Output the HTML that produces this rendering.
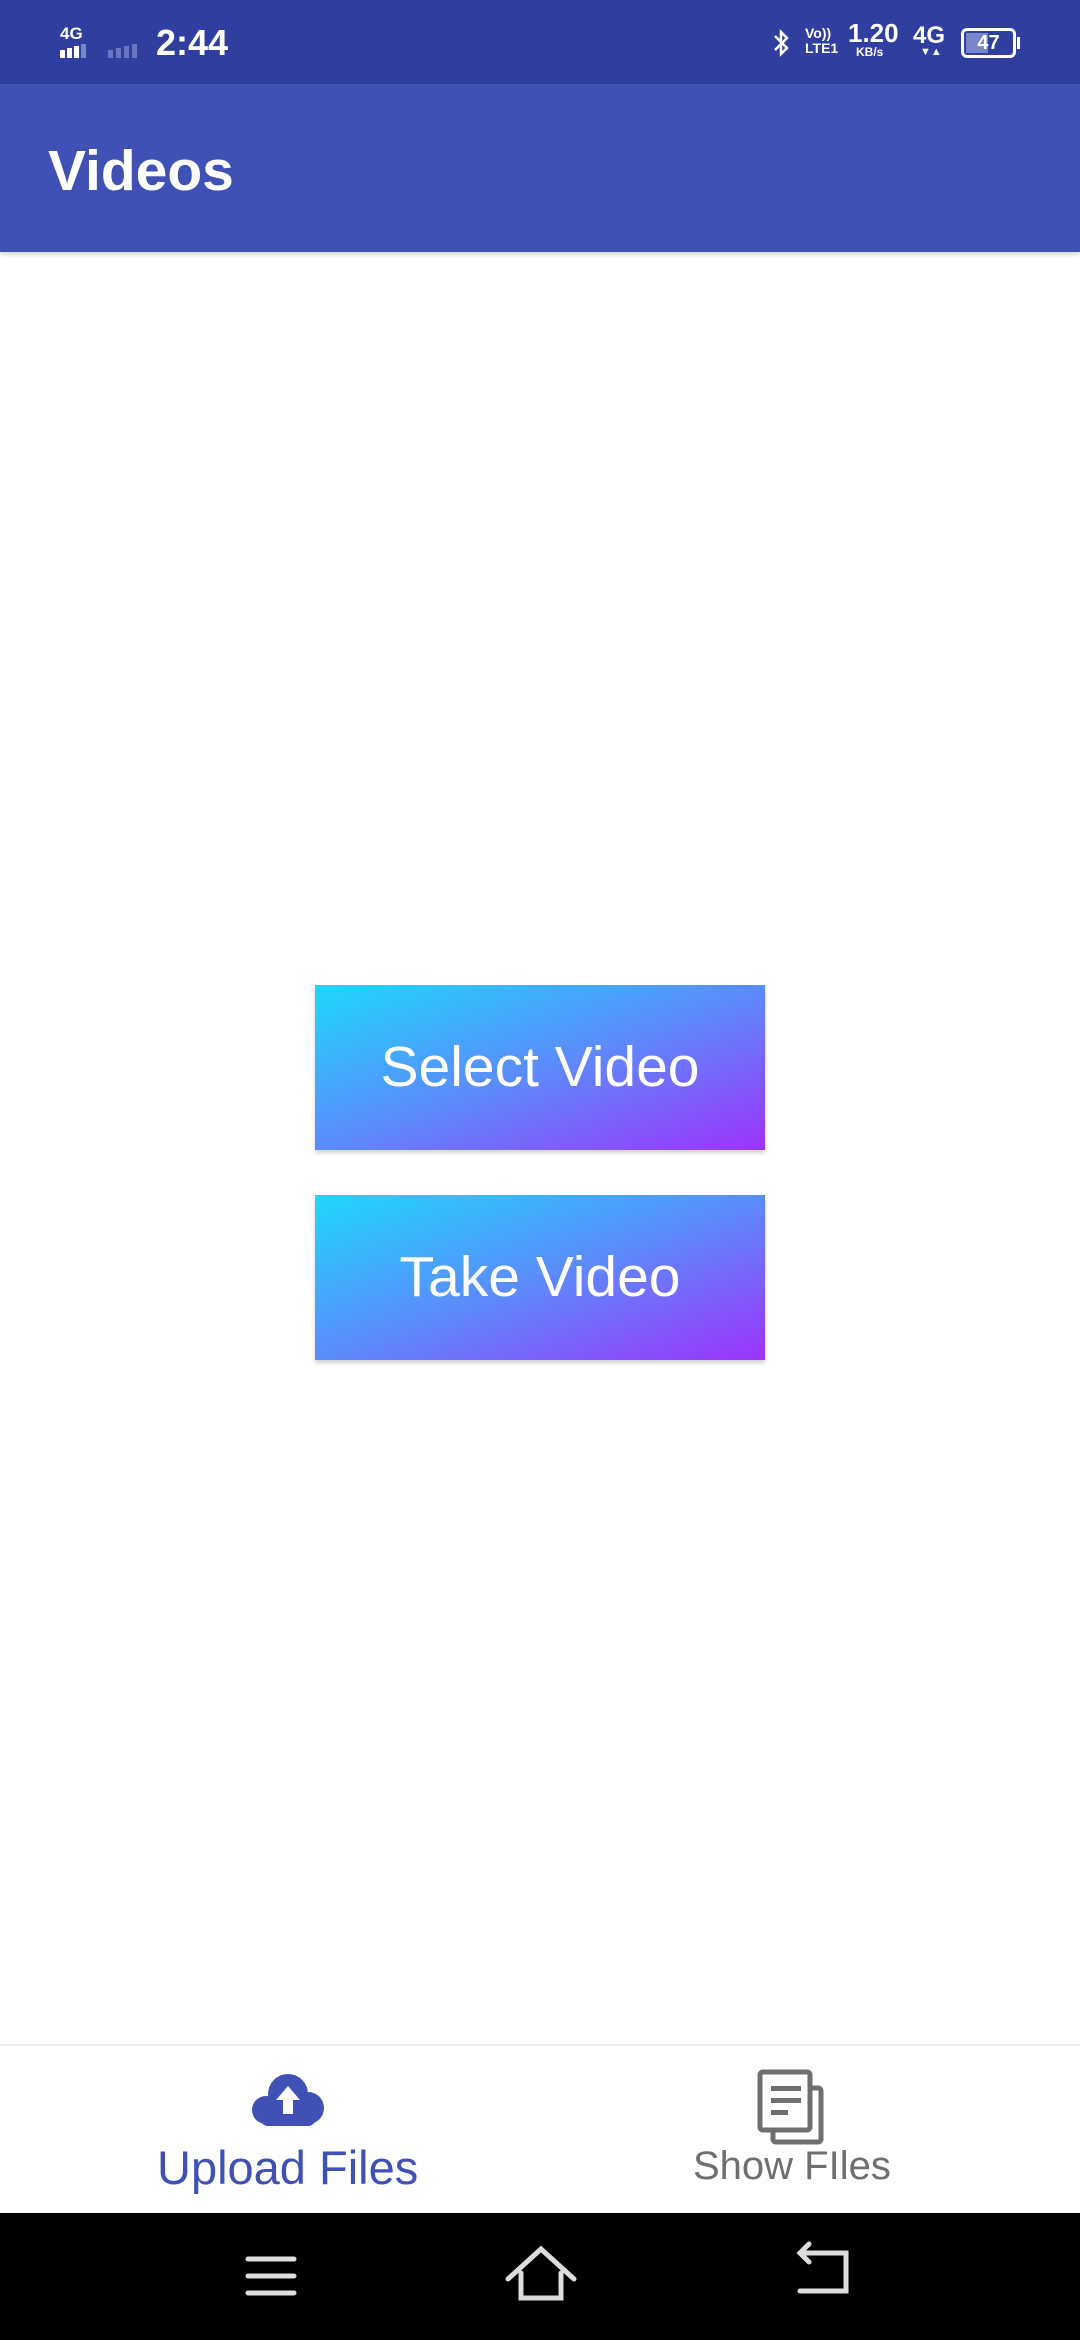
<!DOCTYPE html>
<html><head><meta charset="utf-8"><style>
*{margin:0;padding:0;box-sizing:border-box}
body{width:1080px;height:2340px;position:relative;background:#fff;font-family:"Liberation Sans",sans-serif;overflow:hidden}
.abs{position:absolute}
.btn{position:absolute;left:315px;width:450px;height:165px;background:linear-gradient(160deg,#1ed8fd 0%,#5b8cfb 50%,#9d33fb 100%);color:#fff;font-size:57px;text-align:center;line-height:165px;box-shadow:0 3px 4px rgba(0,0,0,.18)}
</style></head><body>
<div class="abs" style="left:0;top:0;width:1080px;height:84px;background:#303f9f"></div>
<div class="abs" style="left:60px;top:24px;color:#fff;font-size:17px;font-weight:bold">4G</div>
<div class="abs" style="left:60px;top:44px;width:40px;height:14px">
<span class="abs" style="left:0;top:6px;width:5px;height:8px;background:#fff"></span>
<span class="abs" style="left:7px;top:4px;width:5px;height:10px;background:#fff"></span>
<span class="abs" style="left:14px;top:2px;width:5px;height:12px;background:#fff"></span>
<span class="abs" style="left:21px;top:0;width:5px;height:14px;background:#7a86c8"></span>
</div>
<div class="abs" style="left:108px;top:44px;width:36px;height:14px">
<span class="abs" style="left:0;top:6px;width:5px;height:8px;background:#6a77c0"></span>
<span class="abs" style="left:8px;top:4px;width:5px;height:10px;background:#6a77c0"></span>
<span class="abs" style="left:16px;top:2px;width:5px;height:12px;background:#6a77c0"></span>
<span class="abs" style="left:24px;top:0;width:5px;height:14px;background:#6a77c0"></span>
</div>
<div class="abs" style="left:156px;top:22px;color:#fff;font-size:36px;font-weight:bold">2:44</div>
<svg class="abs" style="left:772px;top:28px" width="18" height="30" viewBox="0 0 18 30"><path d="M3 8 L15 20 L9 26 V4 L15 10 L3 22" fill="none" stroke="#fff" stroke-width="2.5"/></svg>
<div class="abs" style="left:805px;top:26px;color:#fff;font-size:14px;font-weight:bold;line-height:15px">Vo))<br>LTE1</div>
<div class="abs" style="left:848px;top:20px;color:#fff;font-size:26px;font-weight:bold;line-height:26px">1.20</div>
<div class="abs" style="left:856px;top:45px;color:#fff;font-size:12px;font-weight:bold">KB/s</div>
<div class="abs" style="left:913px;top:22px;color:#fff;font-size:24px;font-weight:bold">4G</div>
<div class="abs" style="left:920px;top:46px;color:#fff;font-size:11px">▼▲</div>
<div class="abs" style="left:961px;top:28px;width:55px;height:30px;border:3px solid #fff;border-radius:6px;color:#fff;font-size:20px;font-weight:bold;text-align:center;line-height:24px"><span class="abs" style="left:2px;top:2px;width:22px;height:20px;background:#7986cb"></span><span style="position:relative">47</span></div>
<div class="abs" style="left:1017px;top:37px;width:3px;height:12px;background:#fff"></div>

<div class="abs" style="left:0;top:84px;width:1080px;height:168px;background:#3f51b5;box-shadow:0 2px 5px rgba(0,0,0,.2)"></div>
<div class="abs" style="left:48px;top:136px;color:#fff;font-size:57px;font-weight:bold;line-height:70px">Videos</div>

<div class="btn" style="top:985px">Select Video</div>
<div class="btn" style="top:1195px">Take Video</div>

<div class="abs" style="left:0;top:2044px;width:1080px;height:2px;background:#eee"></div>
<svg class="abs" style="left:250px;top:2070px" width="76" height="58" viewBox="0 0 76 58">
<circle cx="38" cy="24" r="20" fill="#3f51b5"/>
<circle cx="58" cy="38" r="16" fill="#3f51b5"/>
<circle cx="16" cy="40" r="14" fill="#3f51b5"/>
<rect x="10" y="36" width="56" height="20" rx="8" fill="#3f51b5"/>
<path d="M38 16 L50 30 H43 V44 H33 V30 H26 Z" fill="#fff"/>
</svg>
<div class="abs" style="left:157px;top:2140px;color:#3f51b5;font-size:47px">Upload Files</div>
<svg class="abs" style="left:755px;top:2068px" width="72" height="78" viewBox="0 0 72 78">
<rect x="18" y="20" width="48" height="54" rx="3" fill="none" stroke="#6f6f6f" stroke-width="5"/>
<rect x="5" y="4" width="50" height="58" rx="3" fill="#fff" stroke="#6f6f6f" stroke-width="5"/>
<rect x="16" y="18" width="30" height="5" fill="#6f6f6f"/>
<rect x="16" y="30" width="30" height="5" fill="#6f6f6f"/>
<rect x="16" y="42" width="17" height="5" fill="#6f6f6f"/>
</svg>
<div class="abs" style="left:693px;top:2144px;color:#6f6f6f;font-size:40px">Show FIles</div>

<div class="abs" style="left:0;top:2213px;width:1080px;height:127px;background:#000"></div>
<svg class="abs" style="left:0;top:2213px" width="1080" height="127">
<g stroke="#ddd" stroke-width="5" fill="none" stroke-linecap="round">
<path d="M248 46 H294 M248 63 H294 M248 80 H294"/>
<path d="M508 66 L541 36 L574 66 M521 60 V85 H561 V60"/>
<path d="M800 78 H846 V40 H800 M809 31 L800 40 L809 49"/>
</g></svg>
</body></html>
